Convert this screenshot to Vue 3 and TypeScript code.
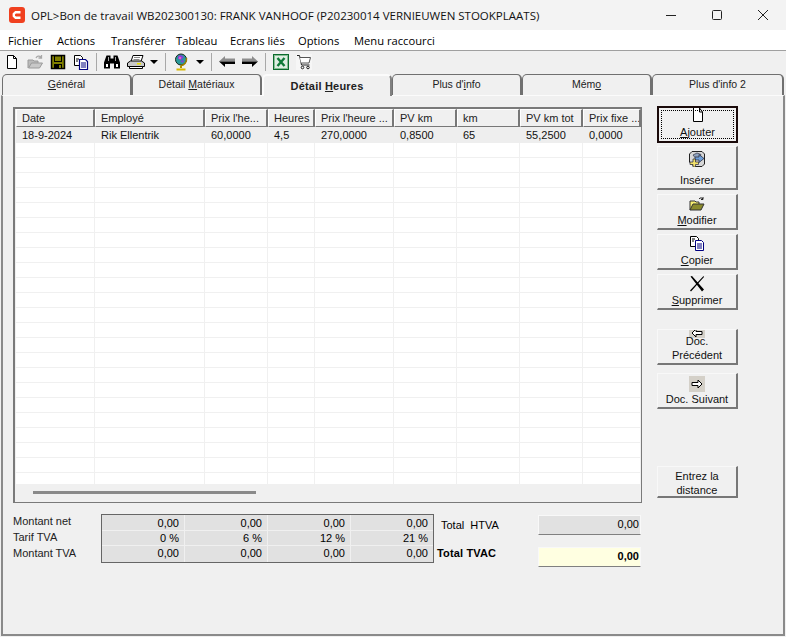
<script setup lang="ts">
interface Column {
  label: string;
  width: number;
  value: string;
}

const columns: Column[] = [
  { label: 'Date', width: 79, value: '18-9-2024' },
  { label: 'Employé', width: 110, value: 'Rik Ellentrik' },
  { label: "Prix l'he...", width: 63, value: '60,0000' },
  { label: 'Heures', width: 47, value: '4,5' },
  { label: "Prix l'heure ...", width: 79, value: '270,0000' },
  { label: 'PV km', width: 63, value: '0,8500' },
  { label: 'km', width: 63, value: '65' },
  { label: 'PV km tot', width: 63, value: '55,2500' },
  { label: 'Prix fixe ...', width: 58, value: '0,0000' },
];

const emptyRows = 23;

const menus = [
  { label: 'Fichier', width: 49 },
  { label: 'Actions', width: 54 },
  { label: 'Transférer', width: 65 },
  { label: 'Tableau', width: 54 },
  { label: 'Ecrans liés', width: 68 },
  { label: 'Options', width: 56 },
  { label: 'Menu raccourci', width: 90 },
];

const totals = [
  ['0,00', '0,00', '0,00', '0,00'],
  ['0 %', '6 %', '12 %', '21 %'],
  ['0,00', '0,00', '0,00', '0,00'],
];
</script>

<template>
  <div class="window">
    <header class="titlebar">
      <svg class="logo" width="16" height="16" viewBox="0 0 16 16">
        <rect width="16" height="16" rx="3" fill="#f0401f" />
        <path d="M11.5 5.2H6.6L4.8 7v2l1.8 1.8h4.9" fill="none" stroke="#fff" stroke-width="2.4" />
      </svg>
      <span class="title">OPL&gt;Bon de travail WB202300130: FRANK VANHOOF (P20230014 VERNIEUWEN STOOKPLAATS)</span>
      <div class="winctl">
        <svg width="46" height="30" viewBox="0 0 46 30"><path d="M18 15.5h10" stroke="#222" /></svg>
        <svg width="46" height="30" viewBox="0 0 46 30"><rect x="18.5" y="10.5" width="9" height="9" rx="1" fill="none" stroke="#222" /></svg>
        <svg width="46" height="30" viewBox="0 0 46 30"><path d="M18 10l10 10M28 10L18 20" stroke="#222" /></svg>
      </div>
    </header>

    <nav class="menubar">
      <span v-for="m in menus" :key="m.label" :style="{ width: m.width + 'px' }">{{ m.label }}</span>
    </nav>

    <div class="toolbar">
      <svg class="tool" viewBox="0 0 16 16"><path d="M3.500 1.500h6l3 3v10h-9z" fill="#fff" stroke="#000" /><path d="M9.500 1.500v3h3" fill="none" stroke="#000" /></svg>
      <svg class="tool" viewBox="0 0 16 16"><path d="M1 14V6h5l1 1h4v2" fill="#bbb" stroke="#9a9a9a" /><path d="M1.500 14l3-5h11l-3 5z" fill="#c8c8c8" stroke="#9a9a9a" /><path d="M9 4c1-2 3-2.500 5-1M14.500 1v3h-3" fill="none" stroke="#a8a8a8" stroke-width="1.300" /></svg>
      <svg class="tool" viewBox="0 0 16 16"><rect x="1.500" y="1.500" width="13" height="13" fill="#808000" stroke="#000" stroke-width="1.500" /><rect x="4.500" y="2" width="7" height="5.500" fill="#808000" stroke="#000" /><rect x="4" y="10" width="8" height="4.500" fill="#000" /><rect x="9" y="11" width="2" height="3" fill="#808000" /></svg>
      <svg class="tool" viewBox="0 0 16 16"><path d="M1.500 1.500h6l2 2v8h-8z" fill="#fff" stroke="#000" /><path d="M6.500 5.500h6l2 2v8h-8z" fill="#fff" stroke="#000080" stroke-width="1.200" /><path d="M8 9h5M8 11h5M8 13h5" stroke="#000080" /><path d="M3 5h3M3 7h2" stroke="#000" /></svg>
      <i class="sep" />
      <svg class="tool" viewBox="0 0 16 16"><path d="M2.500 1.500h4v3h3v-3h4l2.500 7v6h-6v-5h-4v5H0v-6z" fill="#000" /><path d="M2 10h2v3H2zM12 10h2v3h-2z" fill="#fff" /><rect x="4" y="3" width="1" height="4" fill="#aaa" /><rect x="11" y="3" width="1" height="4" fill="#aaa" /></svg>
      <svg class="tool tool--print" viewBox="0 0 18 16"><path d="M6 1.500h10l-2 6H4z" fill="#fff" stroke="#000" /><path d="M7 3.500h6M6.500 5.500h6" stroke="#888" /><path d="M.5 9l3-2h11l3 2v3.500H.5z" fill="#c8c8c8" stroke="#000" /><path d="M2.500 12.500h13v2h-13z" fill="#fff" stroke="#000" /><rect x="10" y="9" width="4" height="1.500" fill="#e8e000" /></svg>
      <i class="caret" />
      <i class="sep" />
      <svg class="tool tool--globe" viewBox="0 0 16 18"><circle cx="8" cy="6.500" r="5.500" fill="#2a9a9a" stroke="#1a2a20" /><path d="M5 3l3-1 3 2-3 3-3-1zM7 8l4-1-1 3z" fill="#8040d8" /><path d="M6 4.500l2 1" stroke="#f060c0" stroke-width="2" /><path d="M13.500 5c.5 4-2 7.500-6 7.500" fill="none" stroke="#a08000" stroke-width="1.500" /><path d="M8 13v2" stroke="#b09000" stroke-width="2" /><path d="M3.500 16.500h9" stroke="#d8b800" stroke-width="2" /></svg>
      <i class="caret" />
      <i class="sep" />
      <svg class="tool tool--arrow" viewBox="0 0 16 11"><path d="M0 5.500L6 0v2.500h10v3z" fill="#8c8c8c" /><path d="M0 5.500h16V8H6v3z" fill="#000" /></svg>
      <svg class="tool tool--arrow" viewBox="0 0 16 11"><path d="M16 5.500L10 0v2.500H0v3z" fill="#8c8c8c" /><path d="M16 5.500H0V8h10v3z" fill="#000" /></svg>
      <i class="sep" />
      <svg class="tool" viewBox="0 0 16 16"><rect x=".5" y=".5" width="15" height="15" fill="#dfeee2" stroke="#0b6b2c" /><rect x="1.500" y="1.500" width="13" height="13" fill="none" stroke="#2f8f48" stroke-dasharray="1 1" /><path d="M4.500 4l7 8M11.500 4l-7 8" stroke="#0f7a38" stroke-width="2.400" /></svg>
      <svg class="tool tool--cart" viewBox="0 0 16 16"><rect width="16" height="16" fill="#f6f6f6" /><path d="M1 1.500h2.500l2 9.500h8" fill="none" stroke="#222" /><path d="M4 3.500h10.500l-1.500 5.500H5" fill="#fff" stroke="#555" /><circle cx="6.500" cy="13.500" r="1.300" fill="none" stroke="#222" /><circle cx="12" cy="13.500" r="1.300" fill="none" stroke="#222" /></svg>
    </div>

    <div class="tabs">
      <div class="tab"><span><u>G</u>énéral</span></div>
      <div class="tab"><span>Détail <u>M</u>atériaux</span></div>
      <div class="tab tab--active"><span>Détail <u>H</u>eures</span></div>
      <div class="tab"><span>Plus d'<u>i</u>nfo</span></div>
      <div class="tab"><span>Mém<u>o</u></span></div>
      <div class="tab tab--last"><span>Plus d'info 2</span></div>
    </div>

    <main class="panel">
      <div class="left">
        <section class="grid">
          <div class="grid-head">
            <div v-for="c in columns" :key="c.label" class="hcell" :style="{ width: c.width + 'px' }">{{ c.label }}</div>
          </div>
          <div class="grid-body">
            <div class="row row--on">
              <div v-for="c in columns" :key="c.label" class="cell" :style="{ width: c.width + 'px' }">{{ c.value }}</div>
            </div>
            <div v-for="n in emptyRows" :key="n" class="row">
              <div v-for="c in columns" :key="c.label" class="cell" :style="{ width: c.width + 'px' }" />
            </div>
          </div>
          <div class="hscroll"><i /></div>
        </section>

        <section class="summary">
          <div class="sum-labels">
            <span>Montant net</span>
            <span>Tarif TVA</span>
            <span>Montant TVA</span>
          </div>
          <div class="sum-table">
            <div v-for="(r, i) in totals" :key="i" class="sum-row">
              <span v-for="(v, j) in r" :key="j">{{ v }}</span>
            </div>
          </div>
          <div class="sum-names">
            <span>Total&nbsp; HTVA</span>
            <strong>Total TVAC</strong>
          </div>
          <div class="sum-values">
            <div class="val">0,00</div>
            <div class="val val--total">0,00</div>
          </div>
        </section>
      </div>

      <aside class="actions">
        <button class="btn btn--focus h37">
          <svg class="ico ico--page" viewBox="0 0 12 14"><path d="M1.500 0v13.500h9V4l-3-4M7.500 0v4h3" fill="#fff" stroke="#000" /></svg>
          <span class="focus-label"><u>A</u>jouter</span>
        </button>
        <button class="btn h44">
          <svg class="ico ico--insert" viewBox="0 0 16 16"><path d="M3 .5h10l2.500 2.500v10l-2.500 2.500H5L.5 11V3z" fill="#d8d8d8" stroke="#222" /><path d="M4 4l4-2 4 1.500-1 3H6z" fill="#8fa3bf" stroke="#334" stroke-width=".7" /><path d="M6 6h4V3.500l5 4-5 4V9H6z" fill="#6f9fd8" stroke="#223" stroke-width=".7" /><path d="M1 11h3V8h2.500v3h3v2.500h-3V16H4v-2.500H1z" fill="#f3e26a" stroke="#223" stroke-width=".7" /></svg>
          <span>Insérer</span>
        </button>
        <button class="btn h36">
          <svg class="ico" viewBox="0 0 16 16"><path d="M1 14V5h5l1 1h3v2" fill="#f6ee70" stroke="#333" /><path d="M1 14l3-6h11l-3 6z" fill="#8a8a2c" stroke="#333" /><path d="M10 3c1-1.500 3-1.500 4 0M14 1v2.500h-2" fill="none" stroke="#222" /></svg>
          <span><u>M</u>odifier</span>
        </button>
        <button class="btn h36">
          <svg class="ico" viewBox="0 0 16 16"><path d="M1.500 .5h6l2 2v8h-8z" fill="#fff" stroke="#000" /><path d="M6.500 4.500h6l2 2v8h-8z" fill="#fff" stroke="#000080" /><path d="M8 8h5M8 10h5M8 12h5" stroke="#000080" /><path d="M3 3h3M3 5h2" stroke="#000" /></svg>
          <span><u>C</u>opier</span>
        </button>
        <button class="btn h36">
          <svg class="ico" viewBox="0 0 16 16"><path d="M1.500 .5L3 0l12 13.500-2 2zM14.500 0l.5 1L2 15.500l-1-1z" fill="#000" /></svg>
          <span><u>S</u>upprimer</span>
        </button>
        <button class="btn btn--text h36 mt-doc">
          <div class="clip">
            <svg class="arrow-ico arrow-ico--cut" viewBox="0 0 16 16"><rect width="16" height="16" fill="#d4d0c8" /><path d="M7 4L3 8l4 4V9.500h6v-3H7z" fill="#fff" stroke="#000" /></svg>
          </div>
          <span class="two two--over">Doc.<br />Précédent</span>
        </button>
        <button class="btn h36 mt-next">
          <svg class="arrow-ico" viewBox="0 0 16 16"><rect width="16" height="16" fill="#d4d0c8" /><path d="M9 4l4 4-4 4V9.500H3v-3h6z" fill="#fff" stroke="#000" /></svg>
          <span>Doc. Suivant</span>
        </button>
        <button class="btn h32 mt-dist">
          <span class="two">Entrez la<br />distance</span>
        </button>
      </aside>
    </main>
  </div>
</template>

<style>
html,
body {
  margin: 0;
  background: #f0f0f0;
}
</style>

<style scoped>
.window {
  width: 786px;
  height: 637px;
  box-sizing: border-box;
  display: flex;
  flex-direction: column;
  background: #f0f0f0;
  font-family: "Liberation Sans", Arial, sans-serif;
  font-size: 11px;
  color: #000;
  overflow: hidden;
}

.titlebar {
  height: 30px;
  flex: none;
  display: flex;
  align-items: center;
  background: #f3f3f3;
  padding-left: 9px;
}

.logo {
  flex: none;
}

.title {
  margin-left: 6px;
  font-family: "Open Sans", "Noto Sans", sans-serif;
  font-size: 11.5px;
  white-space: nowrap;
  color: #111;
}

.winctl {
  margin-left: auto;
  display: flex;
}

.menubar {
  height: 20px;
  flex: none;
  display: flex;
  align-items: center;
  padding-left: 8px;
  background: #fff;
  border-bottom: 1px solid #a0a0a0;
  font-family: "Open Sans", "Noto Sans", sans-serif;
  font-size: 11.2px;
}

.menubar span {
  flex: none;
  white-space: nowrap;
}

.toolbar {
  height: 23px;
  flex: none;
  display: flex;
  align-items: center;
  padding: 0 0 2px 4px;
  box-sizing: border-box;
  gap: 7px;
}

.tool {
  width: 16px;
  height: 16px;
  flex: none;
}

.tool--print {
  width: 18px;
  margin-right: -2px;
}

.tool--globe {
  height: 18px;
}

.tool--arrow {
  height: 11px;
}

.sep {
  width: 1px;
  height: 18px;
  flex: none;
  background: #a8a8a8;
}

.caret {
  width: 0;
  height: 0;
  flex: none;
  border-left: 4px solid transparent;
  border-right: 4px solid transparent;
  border-top: 4px solid #000;
}

.tabs {
  height: 21px;
  flex: none;
  display: flex;
  align-items: flex-end;
  padding-left: 2px;
}

.tab {
  width: 130px;
  height: 21px;
  box-sizing: border-box;
  border: 1px solid #707070;
  border-bottom: none;
  border-right-width: 2px;
  border-radius: 5px 5px 0 0;
  background: #f0f0f0;
  text-align: center;
  font-size: 10.5px;
  line-height: 19px;
  color: #222;
}

.tab--active {
  height: 22px;
  margin-bottom: -1px;
  border-width: 2px 2px 0;
  border-color: #fbfbfb #808080 #f0f0f0 #fbfbfb;
  font-size: 11px;
  font-weight: 700;
  line-height: 20px;
  letter-spacing: 0.2px;
  position: relative;
  z-index: 1;
}

.tab--last {
  width: 132px;
}

.panel {
  flex: 1;
  min-height: 0;
  margin: 0 1px 1px 1px;
  border: 2px solid #8a8a8a;
  border-top: 1px solid #fbfbfb;
  padding: 11px 0 0 10px;
  display: flex;
  gap: 15px;
}

.left {
  width: 629px;
  flex: none;
}

.grid {
  height: 396px;
  box-sizing: border-box;
  border: 2px solid #7a7a7a;
  border-right-width: 1px;
  border-bottom-width: 1px;
  padding-left: 1px;
  display: flex;
  flex-direction: column;
  overflow: hidden;
}

.grid-head {
  display: flex;
  flex: none;
  height: 18px;
}

.hcell {
  flex: none;
  box-sizing: border-box;
  height: 18px;
  padding-left: 5px;
  line-height: 17px;
  white-space: nowrap;
  overflow: hidden;
  background: #f0f0f0;
  border: 1px solid #fff;
  border-right: 2px solid #777;
  border-bottom: 1px solid #777;
  color: #222;
}

.grid-body {
  height: 357px;
  flex: none;
  background: #fff;
  overflow: hidden;
}

.row {
  display: flex;
  height: 15px;
  box-sizing: border-box;
  border-bottom: 1px solid #f0f0f0;
}

.row--on {
  height: 16px;
  background: #eee;
  border-bottom: none;
}

.cell {
  flex: none;
  box-sizing: border-box;
  padding-left: 6px;
  line-height: 16px;
  white-space: nowrap;
  border-right: 1px solid #f0f0f0;
  color: #111;
}

.row--on .cell {
  border-right-color: transparent;
}

.hscroll {
  flex: 1;
  padding: 7px 0 0 17px;
}

.hscroll i {
  display: block;
  width: 223px;
  height: 3px;
  background: #8a8a8a;
}

.summary {
  display: flex;
  margin-top: 11px;
}

.sum-labels {
  width: 88px;
  flex: none;
  display: flex;
  flex-direction: column;
  margin-top: -1px;
  line-height: 16px;
  color: #222;
}

.sum-table {
  width: 333px;
  height: 49px;
  flex: none;
  box-sizing: border-box;
  border: 1px solid #666;
  background: #e1e1e1;
}

.sum-row {
  display: flex;
  height: 16px;
  box-sizing: border-box;
  border-bottom: 1px solid #f0f0f0;
}

.sum-row:nth-child(2) {
  height: 15px;
}

.sum-row:last-child {
  border-bottom: none;
}

.sum-row span {
  flex: 1;
  text-align: right;
  padding-right: 5px;
  line-height: 15px;
  border-right: 1px solid #f0f0f0;
}

.sum-row:first-child span {
  line-height: 16px;
}

.sum-row span:last-child {
  border-right: none;
}

.sum-names {
  width: 104px;
  flex: none;
  display: flex;
  flex-direction: column;
  padding-left: 3px;
  box-sizing: border-box;
}

.sum-names span {
  margin: 5px 0 0 4px;
  line-height: 13px;
}

.sum-names strong {
  margin-top: 15px;
  line-height: 13px;
  letter-spacing: 0.15px;
}

.sum-values {
  flex: 1;
}

.val {
  height: 20px;
  box-sizing: border-box;
  margin-top: 1px;
  width: 103px;
  background: #e1e1e1;
  border: 1px solid #f8f8f8;
  border-bottom: 1px solid #808080;
  text-align: right;
  line-height: 16px;
  padding-right: 1px;
}

.val--total {
  margin-top: 12px;
  background: #ffffe1;
  font-weight: 700;
  line-height: 17px;
}

.actions {
  width: 81px;
  flex: none;
  display: flex;
  flex-direction: column;
  gap: 4px;
  margin-top: -1px;
}

.btn {
  width: 81px;
  flex: none;
  box-sizing: border-box;
  padding: 0 0 1px;
  background: #f0f0f0;
  border: 1px solid #f8f8f8;
  border-right: 2px solid #777;
  border-bottom: 2px solid #777;
  font: inherit;
  color: #111;
  display: flex;
  flex-direction: column;
  align-items: center;
  justify-content: space-between;
  overflow: hidden;
  line-height: 13px;
}

.btn--text {
  justify-content: flex-start;
}

.h37 {
  height: 37px;
}

.h44 {
  height: 44px;
}

.h36 {
  height: 36px;
}

.h32 {
  height: 32px;
}

.btn--focus {
  border: 2px solid #1a0a0a;
  position: relative;
  margin-bottom: -1px;
}

.btn--focus::after {
  content: "";
  position: absolute;
  inset: 2px;
  border: 1px dotted #000;
}

.focus-label {
  padding-bottom: 1px;
}

.ico {
  width: 16px;
  height: 16px;
  flex: none;
  margin-top: 1px;
}

.ico--page {
  width: 12px;
  height: 14px;
  margin-top: 0;
}

.ico--insert {
  margin-top: 4px;
}

.clip {
  height: 8px;
  display: flex;
  align-items: flex-end;
  overflow: hidden;
  flex: none;
}

.arrow-ico {
  width: 16px;
  height: 16px;
  flex: none;
  margin-top: 2px;
}

.arrow-ico--cut {
  margin: 0 0 -3px;
}

.two {
  text-align: center;
  line-height: 14px;
}

.two--over {
  margin-top: -4px;
  position: relative;
}

.mt-doc {
  margin-top: 15px;
}

.mt-next {
  margin-top: 4px;
}

.mt-dist {
  margin-top: 53px;
  justify-content: center;
  padding: 2px 0 0;
}
</style>
